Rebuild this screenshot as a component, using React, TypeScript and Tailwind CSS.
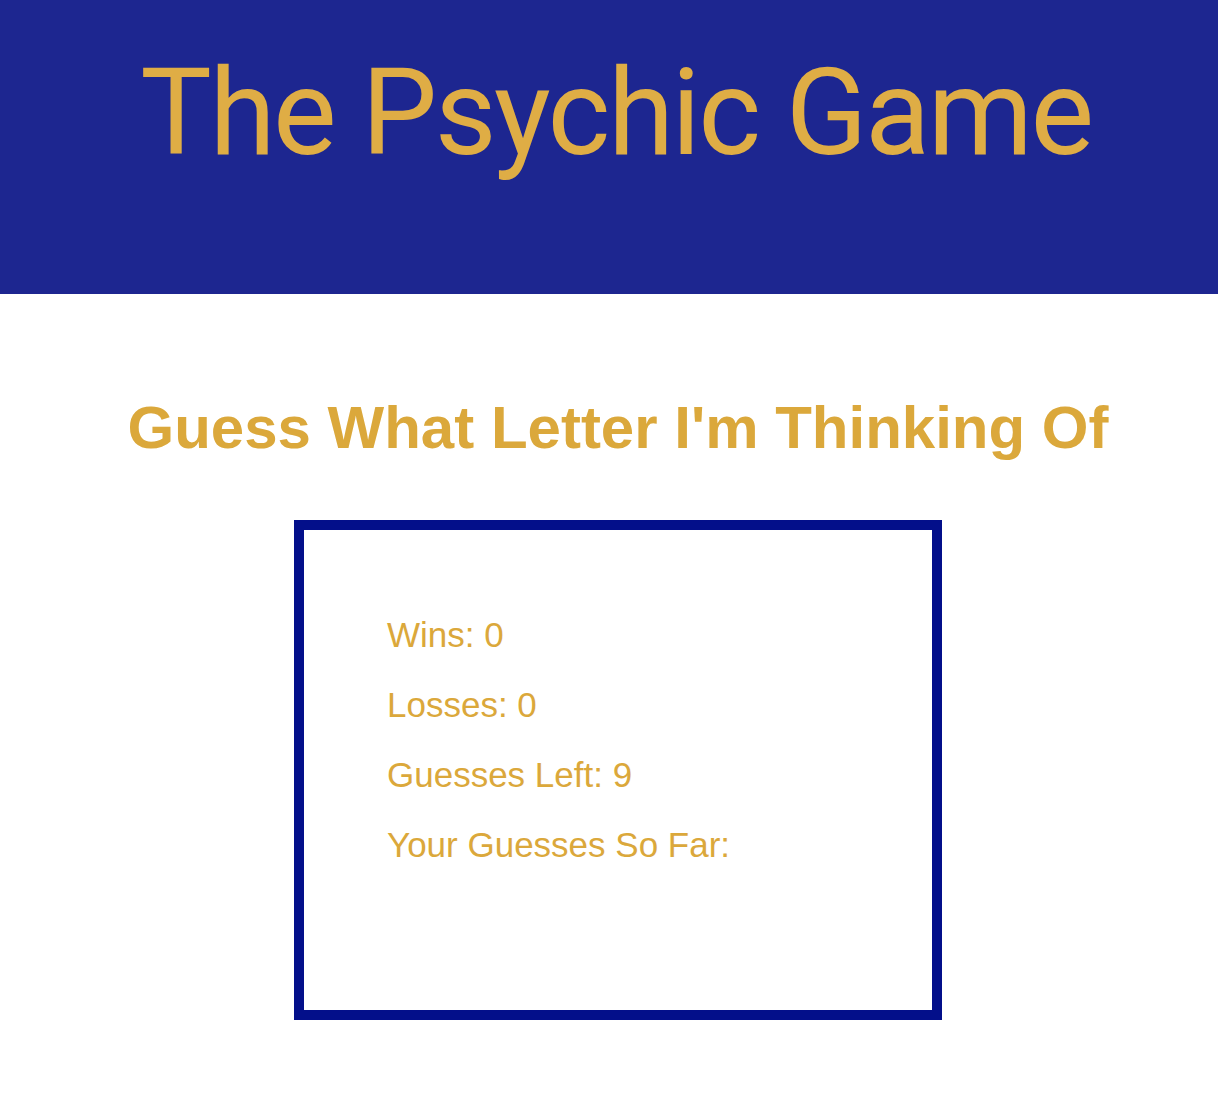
const stats = [
  { label: 'Wins', value: '0' },
  { label: 'Losses', value: '0' },
  { label: 'Guesses Left', value: '9' },
  { label: 'Your Guesses So Far', value: '' },
];

export default function App() {
  return (
    <div className="min-h-[1102px] bg-white font-['Liberation_Sans',Arial,sans-serif] text-[#dba83b]">
      <header className="h-[294px] bg-[#1d2690] pl-[14px] pt-[53px]">
        <h1 className="text-center font-['Roboto',sans-serif] text-[120px] font-normal leading-none tracking-[-2.5px] text-[#dfad45]">
          The Psychic Game
        </h1>
      </header>

      <main className="flex flex-col items-center pl-[18px] pt-[104px]">
        <h2 className="text-center text-[60px] font-bold leading-none">
          Guess What Letter I'm Thinking Of
        </h2>

        <section className="mt-[62px] h-[500px] w-[648px] border-[10px] border-[#030f8a] pl-[83px] pt-[70px]">
          {stats.map((s) => (
            <p key={s.label} className="text-[35px] leading-[70px]">
              {s.label}: {s.value}
            </p>
          ))}
        </section>
      </main>
    </div>
  );
}
